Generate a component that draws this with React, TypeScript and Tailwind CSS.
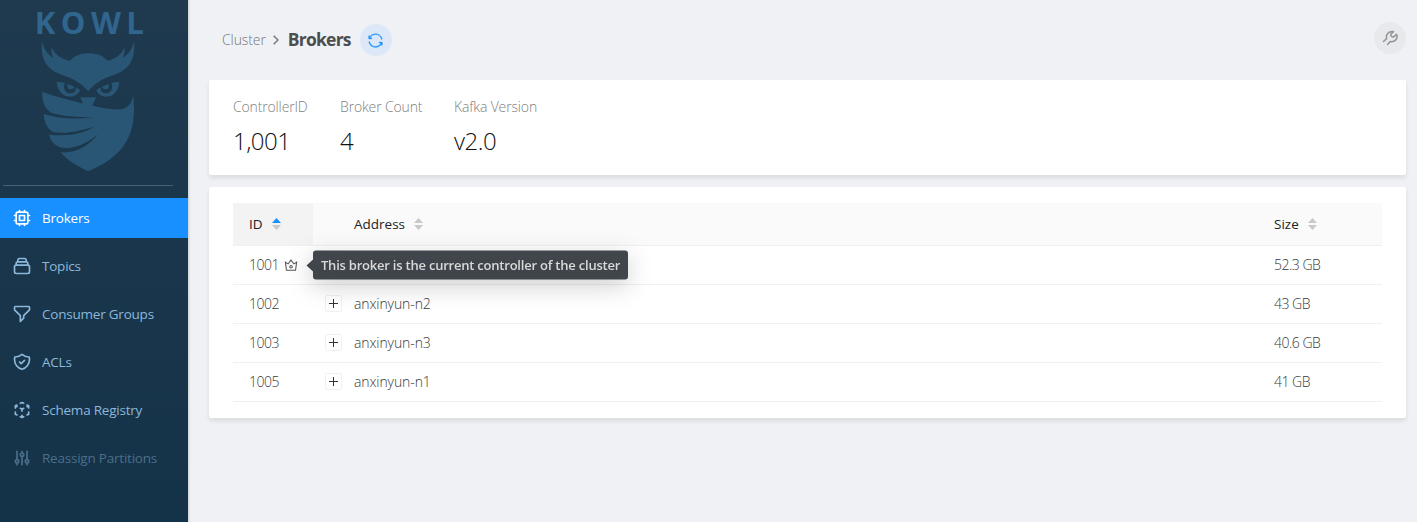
import type { ReactNode } from "react";
import {
  HiOutlineChip,
  HiOutlineCollection,
  HiOutlineFilter,
  HiOutlineShieldCheck,
  HiOutlineCubeTransparent,
  HiOutlineAdjustments,
} from "react-icons/hi";
import { AiOutlineCrown } from "react-icons/ai";
import { GoSync } from "react-icons/go";

function Owl() {
  return (
    <svg className="h-[132px] w-[96px]" viewBox="120 120 288 396" fill="#2a5675">
      <path d="M126 122 C130 146 142 162 160 174 C154 164 153 153 155 142 C164 162 182 178 210 182 C230 154 298 150 322 182 C348 178 366 162 373 142 C375 153 374 164 368 174 C386 162 398 146 402 122 C408 190 380 212 330 229 C300 240 278 256 265 274 C250 256 228 240 198 229 C148 212 120 190 126 122 Z" />
      <path d="M170 246 C180 246 188 247 195 249 C186 266 198 281 212 280 C225 279 229 270 227 262 L240 270 C236 282 225 290 209 290 C187 289 172 271 170 246 Z" />
      <path d="M358 246 C348 246 341 247 334 249 C342 266 331 281 317 280 C304 279 301 270 303 262 L289 270 C293 282 304 290 320 290 C342 289 356 271 358 246 Z" />
      <path d="M203 252 L223 260 C220 269 208 270 203 263 Z M326 252 L306 260 C309 269 321 270 326 263 Z" />
      <path d="M127 275 C165 290 205 298 249 311 L241 292 L289 292 L277 317 C310 324 340 329 362 328 C385 325 396 308 400 284 C406 350 400 395 371 437 C344 474 305 496 265 514 C235 500 204 484 182 457 C230 461 270 435 293 403 C260 432 226 446 192 444 C166 440 152 424 147 404 C204 410 252 402 284 379 C240 394 200 402 164 397 C142 389 133 368 131 341 C178 358 238 358 279 352 C230 350 190 350 154 338 C134 325 125 302 127 275 Z" />
    </svg>
  );
}

function NavItem({ icon, label, state }: { icon: ReactNode; label: string; state?: "active" | "disabled" }) {
  const tone =
    state === "active"
      ? "bg-[#1890ff] text-white"
      : state === "disabled"
        ? "text-[#4b6f8b]"
        : "text-[#8cb8db]";
  return (
    <a className={`flex h-10 items-center gap-[10px] pl-3 text-[13.5px] tracking-[-0.22px] ${tone}`}>
      <span className="flex w-5 justify-center text-[20px]">{icon}</span>
      <span className="pt-px whitespace-nowrap">{label}</span>
    </a>
  );
}

function Sorter({ active }: { active?: boolean }) {
  return (
    <svg className="h-[12px] w-[9px]" viewBox="0 0 9 12">
      <path d="M4.5 0 L9 5 H0 Z" fill={active ? "#1890ff" : "#bfbfbf"} opacity={active ? 1 : 0.85} />
      <path d="M4.5 12 L9 7 H0 Z" fill="#bfbfbf" opacity="0.85" />
    </svg>
  );
}

function Stat({ label, value, width }: { label: string; value: string; width: string }) {
  return (
    <div className={`flex flex-col whitespace-nowrap ${width}`}>
      <span className="text-[14px] leading-[22px] font-light tracking-[-0.15px] text-[#808080]">{label}</span>
      <span className="mt-1 text-[24px] leading-[38px] font-light tracking-[-0.5px] text-[#111]">{value}</span>
    </div>
  );
}

function Expand() {
  return (
    <span className="flex size-[17px] items-center justify-center rounded-[2px] border border-[#f0f0f0] bg-white">
      <svg className="size-[9px]" viewBox="0 0 9 9" stroke="#333" strokeWidth="1">
        <path d="M4.5 0V9M0 4.5H9" />
      </svg>
    </span>
  );
}

const columns = "grid grid-cols-[80px_41px_920px_1fr]";

const brokers = [
  { id: "1001", address: "anxinyun-n4", size: "52.3 GB", controller: true },
  { id: "1002", address: "anxinyun-n2", size: "43 GB" },
  { id: "1003", address: "anxinyun-n3", size: "40.6 GB" },
  { id: "1005", address: "anxinyun-n1", size: "41 GB" },
];

function ControllerMark() {
  return (
    <span className="relative ml-1 flex items-center">
      <AiOutlineCrown className="size-4 text-[#555]" />
      <span className="absolute top-1/2 left-[23px] z-10 flex -translate-y-1/2 items-center drop-shadow-[0_6px_12px_rgba(0,0,0,0.2)]">
        <svg className="h-[12px] w-[7px]" viewBox="0 0 7 12" fill="#40454c">
          <path d="M7 0V12L0.5 6Z" />
        </svg>
        <span className="flex h-[29px] w-[315px] items-center rounded-[3px] bg-[#3b4047]/97 pl-2 text-[13px] font-semibold tracking-[-0.22px] whitespace-nowrap text-[#d9d9d9]">
          This broker is the current controller of the cluster
        </span>
      </span>
    </span>
  );
}

export default function App() {
  return (
    <div className="flex h-[522px] w-[1417px] overflow-hidden bg-[#eff1f5] font-['Open_Sans','Noto_Sans',sans-serif]">
      <aside className="flex w-[188px] shrink-0 flex-col bg-linear-to-b from-[#1f3a4f] to-[#143248] shadow-[1px_0_2px_rgba(0,0,0,0.15)]">
        <div className="flex h-[185px] flex-col items-center pr-[12px]">
          <span className="mt-[5px] h-[35px] pl-[8px] text-[31px] leading-[35px] font-bold tracking-[5.4px] text-[#30658d]">KOWL</span>
          <Owl />
        </div>
        <div className="ml-[3px] h-px w-[170px] bg-[#466273]" />
        <nav className="mt-3 flex flex-col gap-2">
          <NavItem icon={<HiOutlineChip />} label="Brokers" state="active" />
          <NavItem icon={<HiOutlineCollection />} label="Topics" />
          <NavItem icon={<HiOutlineFilter />} label="Consumer Groups" />
          <NavItem icon={<HiOutlineShieldCheck />} label="ACLs" />
          <NavItem icon={<HiOutlineCubeTransparent />} label="Schema Registry" />
          <NavItem icon={<HiOutlineAdjustments />} label="Reassign Partitions" state="disabled" />
        </nav>
      </aside>

      <main className="flex grow flex-col pr-[11px] pl-[21px]">
        <header className="flex h-[80px] items-center pl-[13px]">
          <span className="pb-[2px] text-[14px] font-light tracking-[-0.1px] text-[#777]">Cluster</span>
          <svg className="mr-[9px] mb-px ml-[7px] h-[10px] w-[6px]" viewBox="0 0 6 10" fill="none" stroke="#777" strokeWidth="1.5">
            <path d="M0.7 0.8L5 5L0.7 9.2" />
          </svg>
          <h1 className="pb-[2px] text-[17.5px] font-bold tracking-[-0.77px] text-[#4d4d4d]">Brokers</h1>
          <button className="ml-[9px] flex size-8 items-center justify-center rounded-full bg-[#dce8f8] text-[#1890ff]">
            <GoSync className="size-[15px]" stroke="currentColor" strokeWidth="0.5" />
          </button>
          <button className="mb-1 ml-auto flex size-8 items-center justify-center rounded-full bg-[#e8e9ed] text-[#949494]">
            <svg className="size-4" viewBox="0 0 16 16" fill="none" stroke="currentColor" strokeWidth="1.5" strokeLinecap="round" strokeLinejoin="round">
              <path d="M1.5 11.5L4.6 8.6C3.6 4.5 7 .6 11.5 1.6L8.8 4.2C8.6 6 10 7.2 11.6 6.9L14.5 4.4C16.6 8.4 12.6 12.6 8.2 11.6L5.6 14.5" />
            </svg>
          </button>
        </header>

        <section className="flex h-[95px] shrink-0 rounded-[2px] bg-white pt-4 pl-6 shadow-[0_3px_5px_rgba(0,0,0,0.09)]">
          <Stat label="ControllerID" value="1,001" width="w-[107px]" />
          <Stat label="Broker Count" value="4" width="w-[114px]" />
          <Stat label="Kafka Version" value="v2.0" width="w-[110px]" />
        </section>

        <section className="mt-3 h-[231px] shrink-0 rounded-[2px] bg-white px-6 pt-4 shadow-[0_3px_5px_rgba(0,0,0,0.09)]">
          <div className={`${columns} h-[43px] border-b border-[#f0f0f0] bg-[#fafafa] text-[13.5px] font-medium text-[#222]`}>
            <div className="flex items-center gap-[9px] bg-[#f3f3f3] pl-4">
              ID <Sorter active />
            </div>
            <div />
            <div className="flex items-center gap-[9px]">
              Address <Sorter />
            </div>
            <div className="flex items-center gap-[9px]">
              Size <Sorter />
            </div>
          </div>
          {brokers.map((b) => (
            <div key={b.id} className={`${columns} h-[39px] border-b border-[#f0f0f0] text-[14px] font-light text-[#3a3a3a]`}>
              <div className="flex items-center pl-4">
                <span className="w-[30px] pb-[2px] tracking-[-0.5px]">{b.id}</span>
                {b.controller && <ControllerMark />}
              </div>
              <div className="flex items-center pb-px pl-3">
                <Expand />
              </div>
              <div className="flex items-center pb-[2px] tracking-[-0.1px]">{b.address}</div>
              <div className="flex items-center pb-[2px] tracking-[-0.5px]">{b.size}</div>
            </div>
          ))}
        </section>
      </main>
    </div>
  );
}
